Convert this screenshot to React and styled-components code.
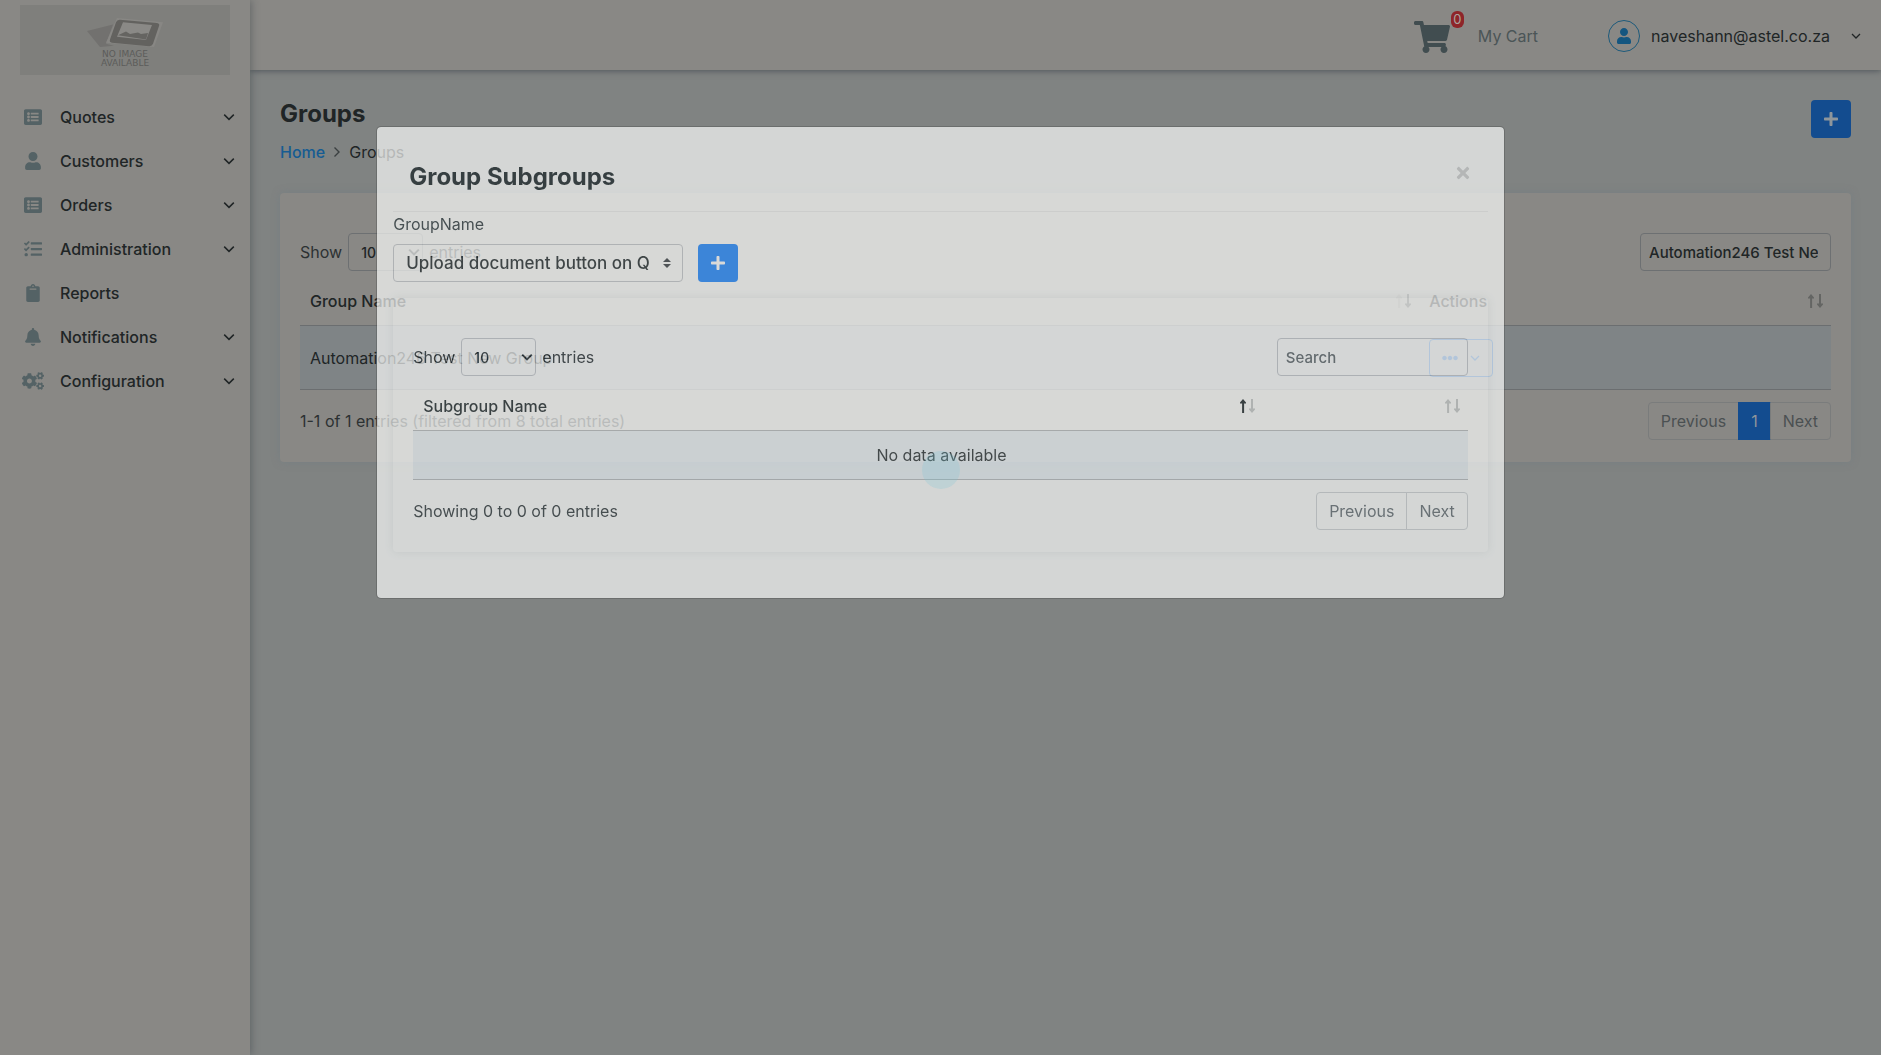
import React from 'react';
import styled, { createGlobalStyle } from 'styled-components';
import {
  FaListAlt, FaUser, FaTasks, FaClipboard, FaBell, FaCogs,
  FaShoppingCart, FaPlus, FaTimes, FaEllipsisH,
} from 'react-icons/fa';

const panel = '#898885';
const canvas = '#808382';
const ink = '#202526';
const primary = '#134c8f';

const GlobalStyle = createGlobalStyle`
  *, *::before, *::after { box-sizing: border-box; }
  body {
    margin: 0;
    background: ${canvas};
    color: ${ink};
    font: 400 16px/24px Inter, "Liberation Sans", sans-serif;
  }
  button, input, select { font-family: inherit; margin: 0; }
`;

const Shell = styled.div`
  display: flex;
  min-height: 100vh;
`;

const Sidebar = styled.aside`
  flex: 0 0 250px;
  background: ${panel};
  box-shadow: 1px 0 8px rgba(40, 50, 58, 0.4);
  z-index: 2;
`;

const Logo = styled.div`
  margin: 5px 20px 20px;
  height: 70px;
  background: #7f7f7c;
  display: flex;
  flex-direction: column;
  align-items: center;
  padding-top: 12px;
  color: #5c5c5a;
  font: 400 9px/9px "DejaVu Sans", sans-serif;
  text-align: center;
  svg { display: block; flex: none; margin-bottom: 2px; }
`;

const Menu = styled.nav`
  display: flex;
  flex-direction: column;
`;

const MenuLink = styled.a`
  display: grid;
  grid-template-columns: 26px 1fr 12px;
  column-gap: 14px;
  align-items: center;
  height: 44px;
  padding: 0 15px 0 20px;
  color: ${ink};
  font-weight: 500;
  text-decoration: none;
  & > svg:first-child { color: #546265; justify-self: center; }
`;

const Main = styled.div`
  flex: 1;
  min-width: 0;
`;

const Header = styled.header`
  display: flex;
  align-items: center;
  justify-content: flex-end;
  height: 70px;
  padding: 2px 20px 0;
  background: ${panel};
  box-shadow: 0 1px 6px rgba(40, 50, 58, 0.55);
`;

const CartLink = styled.a`
  display: flex;
  align-items: center;
  gap: 28px;
  margin-right: 70px;
  color: #4b5557;
  text-decoration: none;
`;

const CartIcon = styled.span`
  position: relative;
  display: flex;
  padding-top: 2px;
  color: #414d50;
`;

const Badge = styled.span`
  position: absolute;
  top: -6px;
  left: 37px;
  width: 13px;
  border-radius: 6px;
  background: #8e2529;
  color: #aaa49f;
  font-size: 13px;
  line-height: 17px;
  text-align: center;
`;

const Account = styled.button`
  display: flex;
  align-items: center;
  padding: 0;
  border: 0;
  background: none;
  color: ${ink};
  font-size: 16px;
  & > span + span { margin: 0 21px 0 11px; }
`;

const Avatar = styled.span`
  display: flex;
  align-items: center;
  justify-content: center;
  width: 32px;
  height: 32px;
  border: 1px solid #1d5a7b;
  border-radius: 50%;
  color: #145680;
`;

const Content = styled.main`
  padding: 30px;
`;

const PageHead = styled.div`
  display: flex;
  justify-content: space-between;
  align-items: flex-start;
  height: 93px;
`;

const Title = styled.h1`
  margin: 0;
  font-size: 24px;
  line-height: 28px;
  font-weight: 700;
`;

const Crumbs = styled.nav`
  display: flex;
  align-items: center;
  gap: 8px;
  margin-top: 12px;
  a { color: #165c92; font-weight: 500; text-decoration: none; }
`;

const AddButton = styled.button`
  display: flex;
  align-items: center;
  justify-content: center;
  width: 40px;
  height: 38px;
  padding: 0;
  border: 0;
  border-radius: 4px;
  background: ${(p) => (p.$bright ? '#1883ff' : primary)};
  color: ${(p) => (p.$bright ? '#fff' : '#8f969b')};
`;

const Card = styled.section`
  padding: 40px 20px 22px;
  border-radius: 4px;
  background: ${(p) => (p.$clear ? 'transparent' : panel)};
  box-shadow: ${(p) => (p.$clear ? '0 0 10px rgba(60, 70, 78, 0.12)' : '0 0 8px rgba(100, 118, 132, 0.35)')};
`;

const Row = styled.div`
  display: flex;
  justify-content: space-between;
  align-items: center;
  margin-top: ${(p) => p.$top || 0}px;
`;

const Length = styled.label`
  display: flex;
  align-items: center;
  gap: 6px;
  color: ${(p) => (p.$bright ? '#232b2e' : '#2c3132')};
`;

const SelectWrap = styled.span`
  position: relative;
  display: block;
  width: ${(p) => p.$width}px;
  svg {
    position: absolute;
    right: ${(p) => p.$inset}px;
    top: 50%;
    transform: translateY(-50%);
    pointer-events: none;
  }
`;

const Select = styled.select`
  appearance: none;
  display: block;
  width: 100%;
  height: 38px;
  padding: 0 ${(p) => p.$end || 20}px 0 12px;
  border: 1px solid ${(p) => (p.$bright ? '#c2c6ca' : '#6d7072')};
  border-radius: 4px;
  background: transparent;
  color: ${(p) => (p.$bright ? '#1c2629' : ink)};
  font-size: ${(p) => p.$size || 14}px;
  font-weight: 500;
`;

const Search = styled.input`
  width: 191px;
  height: 38px;
  padding: 0 12px 0 8px;
  border: 1px solid ${(p) => (p.$bright ? '#c2c6ca' : '#6d7072')};
  border-radius: 4px;
  background: transparent;
  color: ${ink};
  font-size: 15px;
  font-weight: 500;
  &::placeholder { color: #566064; opacity: 1; }
`;

const Table = styled.table`
  width: 100%;
  margin-top: 6px;
  border-collapse: separate;
  border-spacing: 0;
  table-layout: fixed;
  th, td {
    height: 49px;
    padding: 0 8px 0 10px;
    border-bottom: 1px solid ${(p) => (p.$bright ? '#b4b9bc' : '#6b6e70')};
    text-align: left;
    font-weight: 400;
  }
  th { font-weight: 500; }
  th:first-child { width: ${(p) => p.$first}; }
  tbody td {
    height: ${(p) => p.$rowHeight}px;
    background: ${(p) => (p.$bright ? 'rgba(204, 222, 236, 0.35)' : '#7f8486')};
  }
`;

const Head = styled.span`
  display: flex;
  justify-content: space-between;
  align-items: center;
  min-height: 24px;
`;

const Empty = styled.td`
  && { text-align: center; color: #232c2f; }
`;

const RowAction = styled.button`
  display: flex;
  align-items: center;
  gap: 12px;
  height: 38px;
  padding: 0 12px;
  border: 1px solid #174f93;
  border-radius: 4px;
  background: transparent;
  color: #174f93;
`;

const Info = styled.span`
  color: ${(p) => (p.$bright ? '#2c3538' : '#2c3132')};
`;

const Pager = styled.div`
  display: flex;
  height: 38px;
`;

const PageButton = styled.button`
  padding: 0 12px;
  border: 1px solid ${(p) => (p.$bright ? '#cdd1d4' : '#7a7c7c')};
  margin-left: -1px;
  background: transparent;
  color: ${(p) => (p.$bright ? '#5f696f' : '#4b5052')};
  font-size: 16px;
  &:first-child { margin-left: 0; border-radius: 4px 0 0 4px; }
  &:last-child { border-radius: 0 4px 4px 0; }
  &[aria-current] { background: ${primary}; border-color: ${primary}; color: #8f969b; }
`;

const Overlay = styled.div`
  position: fixed;
  inset: 0;
  z-index: 10;
  padding-top: 126px;
`;

const Dialog = styled.div`
  width: 60%;
  margin: 0 auto;
  padding: 16px 16px 46px;
  border: 1px solid rgba(70, 72, 72, 0.5);
  border-radius: 5px;
  background: #fcfefd;
  background-clip: padding-box;
  opacity: 0.68;
  color: #141f23;
`;

const DialogHead = styled.div`
  display: flex;
  justify-content: space-between;
  align-items: flex-start;
  height: 69px;
  padding: 20px 16px 0;
  border-bottom: 1px solid #eceeee;
`;

const Close = styled.button`
  display: flex;
  padding: 1px 0;
  border: 0;
  background: none;
  color: #cdcfce;
`;

const Field = styled.div`
  display: flex;
  flex-direction: column;
  gap: 8px;
  margin-bottom: 16px;
  color: #29363b;
  & > div { display: flex; gap: 15px; }
`;

const Spinner = styled.div`
  position: fixed;
  z-index: 12;
  left: calc(50% - 19px);
  top: 451px;
  width: 38px;
  height: 38px;
  border-radius: 50%;
  background: rgba(120, 195, 215, 0.24);
`;

const Chevron = ({ size = 12, width = 1.5, color = 'currentColor' }) => (
  <svg width={size} height={size} viewBox="0 0 12 12" fill="none" stroke={color} strokeWidth={width} aria-hidden="true">
    <path d="M1.2 3.6 6 8.4l4.8-4.8" />
  </svg>
);

const CrumbArrow = () => (
  <svg width="8" height="12" viewBox="0 0 8 12" fill="none" stroke="#3b4041" strokeWidth="1.4" aria-hidden="true">
    <path d="M1.5 1.5 6 6l-4.5 4.5" />
  </svg>
);

const Sort = ({ up = 0.35, down = 0.35 }) => (
  <svg width="15" height="14" viewBox="0 0 15 14" fill="currentColor" aria-hidden="true">
    <path opacity={up} d="M3 0 6 3.4v1H4.1V14H2.1V4.4H0v-1z" />
    <path opacity={down} d="M12 14 9 10.6v-1h2V0h2v9.6h2v1z" />
  </svg>
);

const UpDown = () => (
  <svg width="8" height="10" viewBox="0 0 8 10" fill="#343a40" aria-hidden="true">
    <path d="M4 0 0 4h8zM4 10 0 6h8z" />
  </svg>
);

const NoImage = () => (
  <svg width="78" height="31" viewBox="0 0 78 29" preserveAspectRatio="none" aria-hidden="true">
    <path d="M1 13 27 7l-7 18 8 2-14 1z" fill="#72716f" />
    <path d="M31 1 77 5 68 28 20 24z" fill="#888784" />
    <path d="M34 2.500 71 5.500Q74 6 73 8.500L67 25Q66 27.500 63 27.300L26 24Q23 23.500 24 21L30 5Q31 2.300 34 2.500z" fill="#63625f" />
    <path d="M37 5 66 7.500 60 21.500 31 18.500z" fill="#8a8986" />
    <path d="M32 17 40 13.500 44 16 52 14.500 55 16 62 15 60 21z" fill="#656461" />
  </svg>
);

const menu = [
  ['Quotes', FaListAlt, 18, true],
  ['Customers', FaUser, 18, true],
  ['Orders', FaListAlt, 18, true],
  ['Administration', FaTasks, 18, true],
  ['Reports', FaClipboard, 18, false],
  ['Notifications', FaBell, 18, true],
  ['Configuration', FaCogs, 22, true],
];

function EntriesLength({ id, bright }) {
  return (
    <Length htmlFor={id} $bright={bright}>
      Show
      <SelectWrap $width={75} $inset={3}>
        <Select id={id} $bright={bright} defaultValue="10">
          <option>10</option>
        </Select>
        <Chevron width={2} />
      </SelectWrap>
      entries
    </Length>
  );
}

export default function App() {
  return (
    <>
      <GlobalStyle />
      <Shell>
        <Sidebar>
          <Logo>
            <NoImage />
            <span>NO IMAGE</span>
            <span>AVAILABLE</span>
          </Logo>
          <Menu aria-label="Main">
            {menu.map(([name, Icon, size, nested]) => (
              <MenuLink href="#" key={name}>
                <Icon size={size} />
                {name}
                {nested && <Chevron />}
              </MenuLink>
            ))}
          </Menu>
        </Sidebar>
        <Main>
          <Header>
            <CartLink href="#">
              <CartIcon>
                <FaShoppingCart size={36} />
                <Badge>0</Badge>
              </CartIcon>
              My Cart
            </CartLink>
            <Account type="button">
              <Avatar><FaUser size={16} /></Avatar>
              <span>naveshann@astel.co.za</span>
              <Chevron size={10} />
            </Account>
          </Header>
          <Content>
            <PageHead>
              <div>
                <Title>Groups</Title>
                <Crumbs aria-label="Breadcrumb">
                  <a href="#">Home</a>
                  <CrumbArrow />
                  <span>Groups</span>
                </Crumbs>
              </div>
              <AddButton type="button" aria-label="Add group"><FaPlus size={16} /></AddButton>
            </PageHead>
            <Card>
              <Row>
                <EntriesLength id="group-length" />
                <Search type="text" aria-label="Search groups" defaultValue="Automation246 Test New Group" />
              </Row>
              <Table $first="73.1%" $rowHeight={64}>
                <thead>
                  <tr>
                    <th><Head>Group Name<Sort up={0.15} down={0.6} /></Head></th>
                    <th><Head>Actions<Sort /></Head></th>
                  </tr>
                </thead>
                <tbody>
                  <tr>
                    <td>Automation246 Test New Group</td>
                    <td>
                      <RowAction type="button" aria-label="Row actions">
                        <FaEllipsisH size={16} />
                        <Chevron size={10} />
                      </RowAction>
                    </td>
                  </tr>
                </tbody>
              </Table>
              <Row $top={12}>
                <Info>1-1 of 1 entries (filtered from 8 total entries)</Info>
                <Pager>
                  <PageButton type="button">Previous</PageButton>
                  <PageButton type="button" aria-current="page">1</PageButton>
                  <PageButton type="button">Next</PageButton>
                </Pager>
              </Row>
            </Card>
          </Content>
        </Main>
      </Shell>
      <Overlay>
        <Dialog role="dialog" aria-labelledby="dialog-title">
          <DialogHead>
            <Title as="h2" id="dialog-title">Group Subgroups</Title>
            <Close type="button" aria-label="Close"><FaTimes size={18} /></Close>
          </DialogHead>
          <Field>
            <label htmlFor="group-name">GroupName</label>
            <div>
              <SelectWrap $width={290} $inset={12}>
                <Select id="group-name" $bright $size={17} $end={28}>
                  <option>Upload document button on Q</option>
                </Select>
                <UpDown />
              </SelectWrap>
              <AddButton type="button" $bright aria-label="Add subgroup"><FaPlus size={16} /></AddButton>
            </div>
          </Field>
          <Card $clear>
            <Row>
              <EntriesLength id="subgroup-length" bright />
              <Search $bright type="text" aria-label="Search subgroups" placeholder="Search" />
            </Row>
            <Table $bright $first="80.6%" $rowHeight={49}>
              <thead>
                <tr>
                  <th><Head>Subgroup Name<Sort up={1} down={0.25} /></Head></th>
                  <th><Head><span /><Sort up={0.25} down={0.25} /></Head></th>
                </tr>
              </thead>
              <tbody>
                <tr><Empty colSpan={2}>No data available</Empty></tr>
              </tbody>
            </Table>
            <Row $top={12}>
              <Info $bright>Showing 0 to 0 of 0 entries</Info>
              <Pager>
                <PageButton $bright type="button">Previous</PageButton>
                <PageButton $bright type="button">Next</PageButton>
              </Pager>
            </Row>
          </Card>
        </Dialog>
      </Overlay>
      <Spinner role="status" aria-label="Loading" />
    </>
  );
}
